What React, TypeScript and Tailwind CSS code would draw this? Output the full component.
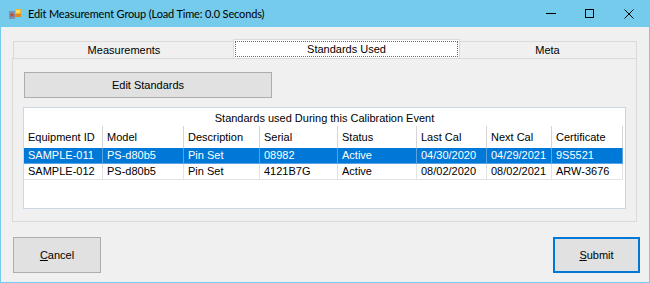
import React from "react";

const columns = [
  { label: "Equipment ID", w: 79 },
  { label: "Model", w: 81 },
  { label: "Description", w: 76 },
  { label: "Serial", w: 78 },
  { label: "Status", w: 79 },
  { label: "Last Cal", w: 70 },
  { label: "Next Cal", w: 65 },
  { label: "Certificate", w: 71 },
];

const rows = [
  ["SAMPLE-011", "PS-d80b5", "Pin Set", "08982", "Active", "04/30/2020", "04/29/2021", "9S5521"],
  ["SAMPLE-012", "PS-d80b5", "Pin Set", "4121B7G", "Active", "08/02/2020", "08/02/2021", "ARW-3676"],
];

function AppIcon() {
  return (
    <svg width="12" height="10" viewBox="0 0 12 10">
      <rect x="0" y="2" width="6" height="8" fill="#7d94b0" />
      <rect x="1.5" y="4.5" width="3" height="3" fill="#d8402c" />
      <rect x="6" y="0" width="6" height="5" fill="#f3b32a" />
      <rect x="6" y="5" width="6" height="3" fill="#e08a1e" />
      <rect x="7" y="1" width="4" height="3" fill="#f8d96a" />
    </svg>
  );
}

export default function App() {
  return (
    <div
      className="w-[650px] h-[283px] flex flex-col bg-[#f0f0f0] border-x border-b border-[#74cbeb] overflow-hidden"
      style={{ fontFamily: '"Liberation Sans", Arial, sans-serif' }}
    >
      {/* Title bar */}
      <div className="h-[27px] shrink-0 bg-[#74cbeb] flex items-center -mx-px">
        <div className="pl-[9px] pr-[7px] flex items-center">
          <AppIcon />
        </div>
        <span
          className="text-[11px] tracking-[-0.15px] text-black leading-none"
          style={{ fontFamily: 'Lato, "Noto Sans", sans-serif' }}
        >
          Edit Measurement Group (Load Time: 0.0 Seconds)
        </span>
        <div className="ml-auto pr-[2px] flex items-center h-full">
          <div className="w-[39px] h-full flex items-center justify-center">
            <div className="w-[10px] h-px bg-black" />
          </div>
          <div className="w-[39px] h-full flex items-center justify-center">
            <div className="w-[9px] h-[9px] border border-black" />
          </div>
          <div className="w-[39px] h-full flex items-center justify-center">
            <svg width="10" height="10" viewBox="0 0 10 10">
              <path d="M0.5 0.5 L9.5 9.5 M9.5 0.5 L0.5 9.5" stroke="#000" strokeWidth="1" />
            </svg>
          </div>
        </div>
      </div>

      {/* Client */}
      <div className="flex-1 flex flex-col pt-[12px] pl-[11px] pr-[12px] text-[11px] text-black">
        {/* Tab headers */}
        <div className="h-[19px] flex items-end">
          <div className="w-[222px] h-[17px] ml-px border border-b-0 border-[#dadada] bg-[#f0f0f0] flex items-center justify-center">
            Measurements
          </div>
          <div className="w-[227px] h-[19px] -mx-[2px] relative z-10 border border-b-0 border-[#dadada] bg-white p-px">
            <div className="w-full h-full border border-dotted border-[#6a6a6a] flex items-center justify-center">
              Standards Used
            </div>
          </div>
          <div className="flex-1 h-[17px] border border-b-0 border-[#dadada] bg-[#f0f0f0] flex items-center justify-center">
            Meta
          </div>
        </div>

        {/* Tab page */}
        <div className="h-[164px] border border-[#dadada] bg-[#f0f0f0] pt-[13px] px-[10px] flex flex-col">
          <button className="ml-px w-[248px] h-[26px] bg-[#e1e1e1] border border-[#adadad] text-[11px] flex items-center justify-center">
            Edit Standards
          </button>

          {/* Grid */}
          <div className="mt-[9px] h-[102px] bg-white border border-[#c9d6e4] flex flex-col">
            <div className="h-[18px] flex items-center justify-center pt-[2px]">
              Standards used During this Calibration Event
            </div>
            <div className="h-[22px] flex">
              {columns.map((c) => (
                <div
                  key={c.label}
                  className="h-full border-r border-[#d5d5d5] flex items-center pl-[4px] bg-white"
                  style={{ width: c.w }}
                >
                  {c.label}
                </div>
              ))}
            </div>
            {rows.map((r, i) => {
              const selected = i === 0;
              return (
                <div key={i} className="h-[16px] flex">
                  {r.map((cell, j) => (
                    <div
                      key={j}
                      className={`h-full flex items-center pl-[4px] border-r border-b ${
                        selected
                          ? "bg-[#0078d7] text-white border-[#5aa3e3]"
                          : "bg-white text-black border-[#e3e3e3]"
                      }`}
                      style={{ width: columns[j].w }}
                    >
                      {cell}
                    </div>
                  ))}
                </div>
              );
            })}
          </div>
        </div>

        {/* Bottom buttons */}
        <div className="mt-[15px] flex justify-between items-start">
          <button className="ml-px w-[88px] h-[36px] bg-[#e1e1e1] border border-[#adadad] text-[11px] flex items-center justify-center">
            <span>
              <span className="underline">C</span>ancel
            </span>
          </button>
          <button className="-mr-[3px] w-[87px] h-[36px] bg-[#e1e1e1] border-2 border-[#0078d7] text-[11px] flex items-center justify-center">
            <span>
              <span className="underline">S</span>ubmit
            </span>
          </button>
        </div>
      </div>
    </div>
  );
}
